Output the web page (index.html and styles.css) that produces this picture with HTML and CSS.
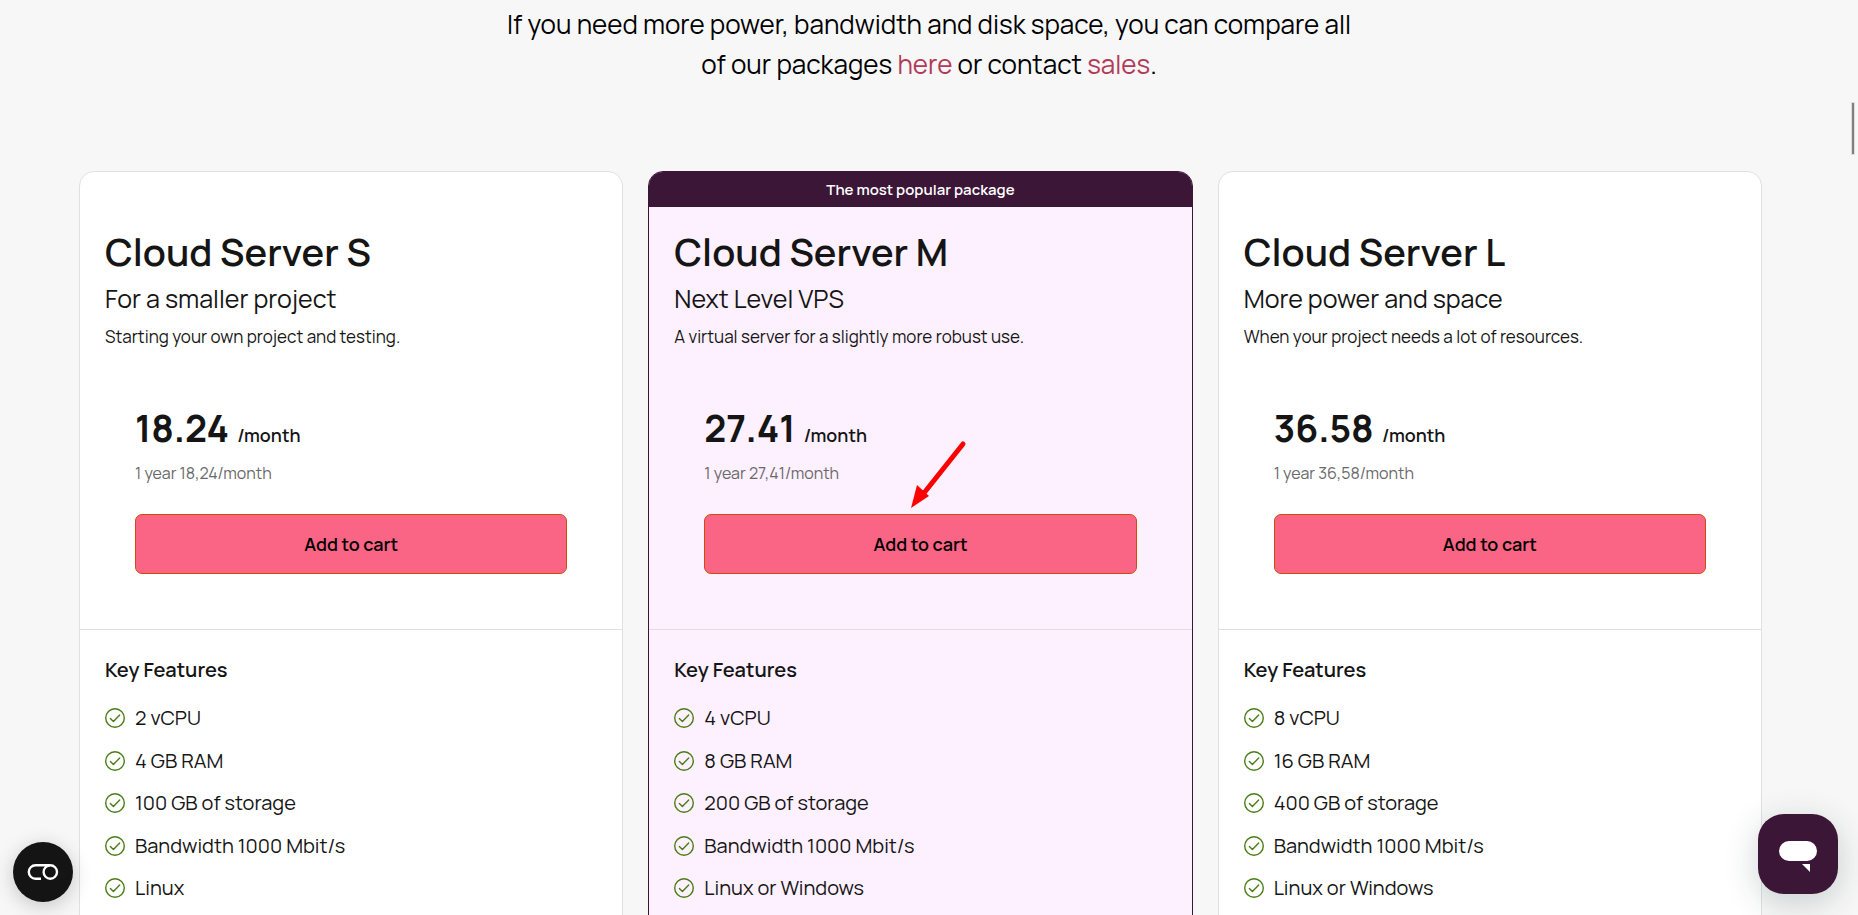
FILE: index.html
```html
<!DOCTYPE html>
<html lang="en">
<head>
    <meta charset="UTF-8">
    <meta name="viewport" content="width=device-width, initial-scale=1.0">
    <title>Cloud Server packages</title>
    <link rel="stylesheet" href="styles.css">
</head>
<body>
    <!-- check icon shared by the feature lists -->
    <svg class="sprite" aria-hidden="true">
        <symbol id="check" viewBox="0 0 20 20">
            <circle cx="10" cy="10" r="9.3" fill="none" stroke="currentColor" stroke-width="1.4"/>
            <path d="M5.4 10.4l3 3L14.7 7" fill="none" stroke="currentColor" stroke-width="1.4" stroke-linecap="round" stroke-linejoin="round"/>
        </symbol>
    </svg>

    <p class="intro">If you need more power, bandwidth and disk space, you can compare all<br>of our packages <a href="#">here</a> or contact <a href="#">sales</a>.</p>

    <main class="packages">
        <article class="card">
            <div class="card-top">
                <h2>Cloud Server S</h2>
                <p class="subtitle">For a smaller project</p>
                <p class="desc">Starting your own project and testing.</p>
                <div class="order">
                    <p class="price"><strong>18.24</strong> <span>/month</span></p>
                    <p class="year">1 year 18,24/month</p>
                    <button type="button" class="cart-btn">Add to cart</button>
                </div>
            </div>
            <div class="features">
                <h3>Key Features</h3>
                <ul>
                    <li><svg class="check"><use href="#check"/></svg>2 vCPU</li>
                    <li><svg class="check"><use href="#check"/></svg>4 GB RAM</li>
                    <li><svg class="check"><use href="#check"/></svg>100 GB of storage</li>
                    <li><svg class="check"><use href="#check"/></svg>Bandwidth 1000 Mbit/s</li>
                    <li><svg class="check"><use href="#check"/></svg>Linux</li>
                </ul>
            </div>
        </article>

        <article class="card popular">
            <div class="badge">The most popular package</div>
            <div class="card-top">
                <h2>Cloud Server M</h2>
                <p class="subtitle">Next Level VPS</p>
                <p class="desc">A virtual server for a slightly more robust use.</p>
                <div class="order">
                    <p class="price"><strong>27.41</strong> <span>/month</span></p>
                    <p class="year">1 year 27,41/month</p>
                    <button type="button" class="cart-btn">Add to cart</button>
                    <svg class="arrow" viewBox="0 0 56 75" aria-hidden="true">
                        <path d="M52 5L13 54" stroke="#ff0000" stroke-width="5" stroke-linecap="round"/>
                        <path d="M0 69L6 46L18 57Z" fill="#ff0000"/>
                    </svg>
                </div>
            </div>
            <div class="features">
                <h3>Key Features</h3>
                <ul>
                    <li><svg class="check"><use href="#check"/></svg>4 vCPU</li>
                    <li><svg class="check"><use href="#check"/></svg>8 GB RAM</li>
                    <li><svg class="check"><use href="#check"/></svg>200 GB of storage</li>
                    <li><svg class="check"><use href="#check"/></svg>Bandwidth 1000 Mbit/s</li>
                    <li><svg class="check"><use href="#check"/></svg>Linux or Windows</li>
                </ul>
            </div>
        </article>

        <article class="card">
            <div class="card-top">
                <h2>Cloud Server L</h2>
                <p class="subtitle">More power and space</p>
                <p class="desc">When your project needs a lot of resources.</p>
                <div class="order">
                    <p class="price"><strong>36.58</strong> <span>/month</span></p>
                    <p class="year">1 year 36,58/month</p>
                    <button type="button" class="cart-btn">Add to cart</button>
                </div>
            </div>
            <div class="features">
                <h3>Key Features</h3>
                <ul>
                    <li><svg class="check"><use href="#check"/></svg>8 vCPU</li>
                    <li><svg class="check"><use href="#check"/></svg>16 GB RAM</li>
                    <li><svg class="check"><use href="#check"/></svg>400 GB of storage</li>
                    <li><svg class="check"><use href="#check"/></svg>Bandwidth 1000 Mbit/s</li>
                    <li><svg class="check"><use href="#check"/></svg>Linux or Windows</li>
                </ul>
            </div>
        </article>
    </main>

    <button type="button" class="cookie-btn" aria-label="Cookie settings">
        <svg width="32" height="18" viewBox="0 0 32 18" fill="none" stroke="#fff" stroke-width="2.4">
            <path d="M14 15.7H8.5a6.7 6.7 0 0 1 0-13.4H23"/>
            <circle cx="23.3" cy="9" r="6.7"/>
        </svg>
    </button>

    <button type="button" class="chat-btn" aria-label="Open chat">
        <svg width="38" height="31" viewBox="0 0 38 31" fill="#fff">
            <rect width="38" height="20" rx="10"/>
            <path d="M23 23h8v8z"/>
        </svg>
    </button>

    <div class="scroll-thumb"></div>
</body>
</html>
```
FILE: styles.css
```css
* {
    box-sizing: border-box;
}
body {
    margin: 0;
    height: 100vh;
    overflow: hidden;
    font-family: Manrope, Inter, sans-serif;
    background-color: #f7f7f7;
    color: #151515;
}
h2, h3, p, ul {
    margin: 0;
    padding: 0;
}
.sprite {
    position: absolute;
    width: 0;
    height: 0;
}
.intro {
    padding: 4px 20px 0;
    font-size: 26px;
    line-height: 40px;
    text-align: center;
    color: #000;
}
.intro a {
    color: #b33a57;
    text-decoration: none;
}
.packages {
    display: grid;
    grid-template-columns: repeat(3, 1fr);
    gap: 25px;
    padding: 87px 96px 0 79px;
}
.card {
    position: relative;
    background: #fff;
    border: 1px solid #e0e0e0;
    border-radius: 15px;
    overflow: hidden;
}
.popular {
    background: #fdf0ff;
    border-color: #3c1637;
}
.badge {
    position: absolute;
    top: 0;
    left: 0;
    right: 0;
    background: #3c1637;
    color: #fff;
    font-size: 15px;
    font-weight: 600;
    line-height: 35px;
    text-align: center;
}
.card-top {
    padding: 54px 25px 55px;
    border-bottom: 1px solid #e0e0e0;
}
h2 {
    font-size: 38px;
    font-weight: 600;
    line-height: 50px;
}
.subtitle {
    font-size: 25px;
    line-height: 46px;
}
.desc {
    font-size: 17px;
    line-height: 30px;
}
.order {
    position: relative;
    padding: 53px 30px 0;
}
.price {
    line-height: 46px;
}
.price strong {
    font-size: 37px;
    font-weight: 700;
}
.price span {
    margin-left: 5px;
    font-size: 18px;
    font-weight: 600;
}
.year {
    margin-bottom: 27px;
    font-size: 16px;
    line-height: 28px;
    color: #6a6a6a;
}
.cart-btn {
    display: block;
    width: 100%;
    height: 60px;
    border: 1px solid #d04a0c;
    border-radius: 7px;
    background: #fa6485;
    color: #000;
    font-family: inherit;
    font-size: 18px;
    font-weight: 600;
    cursor: pointer;
}
.arrow {
    position: absolute;
    right: 200px;
    bottom: 60px;
    width: 56px;
    height: 75px;
}
.features {
    padding: 25px 25px 40px;
}
h3 {
    margin-bottom: 18px;
    font-size: 20px;
    font-weight: 600;
    line-height: 30px;
}
ul {
    display: flex;
    flex-direction: column;
    justify-content: space-between;
    height: 200px;
    list-style: none;
}
li {
    display: flex;
    align-items: center;
    gap: 10px;
    font-size: 20px;
    line-height: 30px;
}
.check {
    width: 20px;
    height: 20px;
    color: #4a7d17;
}
.cookie-btn {
    position: fixed;
    left: 13px;
    bottom: 13px;
    display: flex;
    align-items: center;
    justify-content: center;
    width: 60px;
    height: 60px;
    padding: 0;
    border: none;
    border-radius: 50%;
    background: #141414;
    box-shadow: 0 4px 20px rgba(0, 0, 0, 0.2);
}
.chat-btn {
    position: fixed;
    right: 20px;
    bottom: 21px;
    display: flex;
    align-items: center;
    justify-content: center;
    width: 80px;
    height: 80px;
    padding: 4px 0 0;
    border: none;
    border-radius: 26px;
    background: #3c1637;
    box-shadow: 0 8px 34px rgba(0, 40, 40, 0.2);
}
.scroll-thumb {
    position: fixed;
    top: 103px;
    right: 4px;
    width: 2px;
    height: 51px;
    background: #808080;
    box-shadow: 0 0 0 1px #dcdcdc;
}
```
